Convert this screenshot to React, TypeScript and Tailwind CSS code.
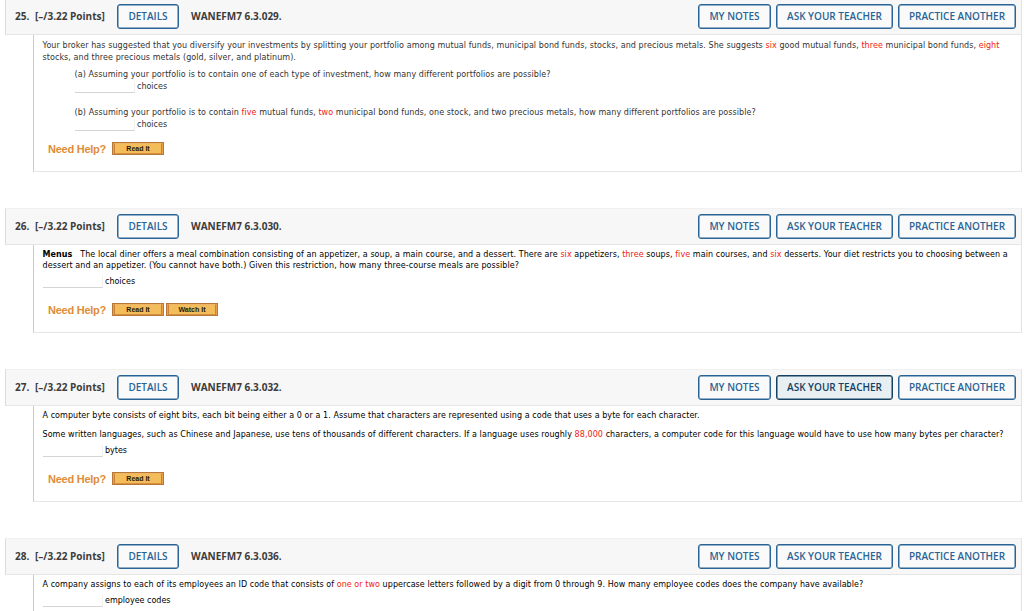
import type { ReactNode } from "react";
import clsx from "clsx";

interface LineProps {
  children: ReactNode;
  className?: string;
}

const Line = ({ children, className = "tracking-[0.075px]" }: LineProps) => (
  <p className={clsx("flex whitespace-pre", className)}>
    <span>{children}</span>
  </p>
);

const Red = ({ children }: { children: ReactNode }) => (
  <span className="text-[#f01a10]">{children}</span>
);

interface AnswerProps {
  unit: string;
  className?: string;
}

const Answer = ({ unit, className }: AnswerProps) => (
  <div className={clsx("flex h-[13px]", className)}>
    <span className="h-[12px] w-[60px] shrink-0 border-r border-b border-r-[#f0f0f0] border-b-[#d4d4d4]" />
    <span className="ml-[2.5px] leading-[12px]">{unit}</span>
  </div>
);

interface HeaderButtonProps {
  label: string;
  className: string;
  active?: boolean;
}

const HeaderButton = ({ label, className, active }: HeaderButtonProps) => (
  <button
    className={clsx(
      "flex h-[25px] shrink-0 items-center justify-center rounded-[3px] border font-semibold whitespace-nowrap shadow-[inset_0_0_0_0.5px]",
      active
        ? "border-[#15405f] bg-[#e7eff3] text-[#15405f] shadow-[#15405f]"
        : "border-[#2a6496] bg-[#fafafa] text-[#2a6496] shadow-[#2a6496]",
      className
    )}
  >
    {label}
  </button>
);

const HelpButton = ({ label }: { label: string }) => (
  <button className="flex h-[13px] w-[52px] items-center justify-center border border-[#b8783a] bg-[#e9a04a] px-px">
    <span className="flex h-full w-full items-center justify-center border border-t-[#eeb566] border-r-[#c98338] border-b-[#d98f3c] border-l-[#c98338] bg-[#f3bd5b] pt-px font-['Liberation_Sans'] text-[7px] leading-[8px] font-bold text-[#2b1a05]">
      {label}
    </span>
  </button>
);

interface NeedHelpProps {
  buttons: string[];
  className?: string;
}

const NeedHelp = ({ buttons, className }: NeedHelpProps) => (
  <div className={clsx("ml-[5.5px] flex h-[13px] items-center", className)}>
    <span className="w-[64px] shrink-0 font-['Liberation_Sans'] text-[11px] leading-[12px] font-bold tracking-[-0.25px] whitespace-nowrap text-[#e08c38]">
      Need Help?
    </span>
    <div className="flex gap-[2px]">
      {buttons.map((label) => (
        <HelpButton key={label} label={label} />
      ))}
    </div>
  </div>
);

interface QuestionProps {
  number: number;
  code: string;
  height: string;
  askActive?: boolean;
  textColor?: string;
  children: ReactNode;
}

const Question = ({
  number,
  code,
  height,
  askActive,
  textColor = "text-black",
  children,
}: QuestionProps) => (
  <section className="mb-[36px] ml-[5px] w-[1017px]">
    <header className="flex h-[37px] items-center border border-t-[#f0f0f0] border-r-[#e4e4e4] border-b-[#e6e6e6] border-l-[#dcdcdc] bg-[#f7f7f7] pr-[5px] pl-[9px] font-['Open_Sans'] text-[10px] text-[#3c3c3c]">
      <span className="w-[20px] font-bold">{number}.</span>
      <span className="w-[82px] font-bold whitespace-nowrap">[–/3.22 Points]</span>
      <HeaderButton label="DETAILS" className="w-[62px]" />
      <span className="ml-[12px] font-bold whitespace-nowrap">{code}</span>
      <div className="ml-auto flex gap-[5px]">
        <HeaderButton label="MY NOTES" className="w-[73px]" />
        <HeaderButton label="ASK YOUR TEACHER" className="w-[117px]" active={askActive} />
        <HeaderButton label="PRACTICE ANOTHER" className="w-[118px]" />
      </div>
    </header>
    <div
      className={clsx(
        "ml-[28px] border-r border-b border-l border-r-[#e2e2e2] border-b-[#e6e6e6] border-l-[#cccccc] pl-[8.5px] font-['DejaVu_Sans'] text-[8px] leading-[12px]",
        height,
        textColor
      )}
    >
      {children}
    </div>
  </section>
);

const App = () => {
  return (
    <main className="h-[611px] w-[1024px] overflow-hidden bg-white">
      <div className="-mt-[2px]">
        <Question number={25} code="WANEFM7 6.3.029." height="h-[137px]" textColor="text-[#333333]">
          <Line className="pt-[5px] tracking-[0.075px]">
            Your broker has suggested that you diversify your investments by splitting your portfolio among mutual funds, municipal bond funds, stocks, and precious metals. She suggests <Red>six</Red> good mutual funds, <Red>three</Red> municipal bond funds, <Red>eight</Red>
          </Line>
          <Line>stocks, and three precious metals (gold, silver, and platinum).</Line>
          <div className="ml-[32px]">
            <Line className="mt-[5px] tracking-[0.075px]">
              (a) Assuming your portfolio is to contain one of each type of investment, how many different portfolios are possible?
            </Line>
            <Answer unit="choices" />
            <Line className="mt-[13px] tracking-[0.08px]">
              (b) Assuming your portfolio is to contain <Red>five</Red> mutual funds, <Red>two</Red> municipal bond funds, one stock, and two precious metals, how many different portfolios are possible?
            </Line>
            <Answer unit="choices" />
          </div>
          <NeedHelp buttons={["Read It"]} className="mt-[10px]" />
        </Question>

        <Question number={26} code="WANEFM7 6.3.030." height="h-[88px]">
          <Line className="pt-[4px] tracking-[0.068px]">
            <b>Menus</b>{"   "}The local diner offers a meal combination consisting of an appetizer, a soup, a main course, and a dessert. There are <Red>six</Red> appetizers, <Red>three</Red> soups, <Red>five</Red> main courses, and <Red>six</Red> desserts. Your diet restricts you to choosing between a
          </Line>
          <Line className="-mt-px tracking-[0.08px]">
            dessert and an appetizer. (You cannot have both.) Given this restriction, how many three-course meals are possible?
          </Line>
          <Answer unit="choices" className="mt-[4px]" />
          <NeedHelp buttons={["Read It", "Watch It"]} className="mt-[14px]" />
        </Question>

        <Question number={27} code="WANEFM7 6.3.032." height="h-[96px]" askActive>
          <Line className="pt-[4px] tracking-[0.06px]">
            A computer byte consists of eight bits, each bit being either a 0 or a 1. Assume that characters are represented using a code that uses a byte for each character.
          </Line>
          <Line className="mt-[7px] tracking-[0.072px]">
            Some written languages, such as Chinese and Japanese, use tens of thousands of different characters. If a language uses roughly <Red>88,000</Red> characters, a computer code for this language would have to use how many bytes per character?
          </Line>
          <Answer unit="bytes" className="mt-[4px]" />
          <NeedHelp buttons={["Read It"]} className="mt-[14px]" />
        </Question>

        <Question number={28} code="WANEFM7 6.3.036." height="h-[96px]">
          <Line className="pt-[4px] tracking-[0.06px]">
            A company assigns to each of its employees an ID code that consists of <Red>one or two</Red> uppercase letters followed by a digit from 0 through 9. How many employee codes does the company have available?
          </Line>
          <Answer unit="employee codes" className="mt-[4px]" />
        </Question>
      </div>
    </main>
  );
};

export default App;
